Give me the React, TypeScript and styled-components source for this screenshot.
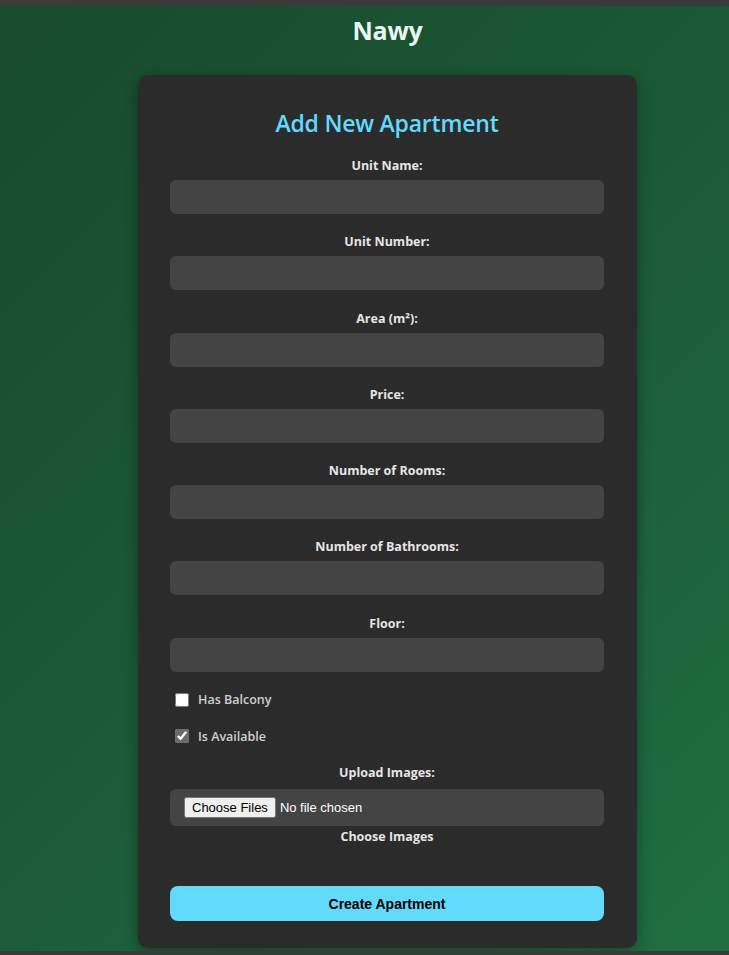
import React from "react";
import styled, { createGlobalStyle } from "styled-components";

const GlobalStyle = createGlobalStyle`
  html, body { margin: 0; padding: 0; background: #3a3a3a; }
  body { font-family: "Open Sans", "Noto Sans", sans-serif; }
  * { box-sizing: border-box; }
`;

const Page = styled.div`
  margin-top: 6px;
  height: 945px;
  padding-left: 46px;
  background: linear-gradient(135deg, #184a2d 0%, #1b5a36 50%, #1f6f42 100%);
  display: flex;
  flex-direction: column;
  align-items: center;
`;

const Brand = styled.h1`
  margin: 8px 0 0;
  font-size: 25px;
  line-height: 32px;
  font-weight: 700;
  color: #eaf6f0;
  letter-spacing: -0.3px;
`;

const Card = styled.form`
  margin-top: 29px;
  width: 499px;
  background: #2b2b2b;
  border-radius: 10px;
  box-shadow: 0 4px 14px rgba(0, 0, 0, 0.35);
  padding: 32px 33px 27px 32px;
  display: flex;
  flex-direction: column;
`;

const Heading = styled.h2`
  margin: 0 0 19px;
  text-align: center;
  font-size: 23px;
  line-height: 32px;
  font-weight: 600;
  color: #61dafb;
  letter-spacing: -0.2px;
`;

const Fields = styled.div`
  display: flex;
  flex-direction: column;
  gap: 20.25px;
`;

const Group = styled.div<{ $gap?: number; $offset?: number }>`
  display: flex;
  flex-direction: column;
  gap: ${(p) => p.$gap ?? 6}px;
  margin-top: ${(p) => p.$offset ?? 0}px;
`;

const Label = styled.label`
  display: block;
  text-align: center;
  font-size: 12.5px;
  line-height: 16px;
  font-weight: 700;
  color: #e6e6e6;
`;

const TextInput = styled.input`
  display: block;
  width: 100%;
  height: 34px;
  border: none;
  border-radius: 6px;
  background: #444444;
  color: #fff;
  padding: 0 10px;
  outline: none;
`;

const CheckRow = styled.label`
  display: flex;
  align-items: center;
  height: 16px;
  font-size: 12.5px;
  font-weight: 600;
  color: #cfcfcf;
  gap: 9px;
  input {
    width: 14px;
    height: 14px;
    margin: 0 0 0 5px;
    accent-color: #6b6b6b;
  }
`;

const FileBox = styled.div`
  height: 37px;
  border-radius: 6px;
  background: #444444;
  display: flex;
  align-items: center;
  padding: 0 14px;
  input {
    font-family: Arial, "Liberation Sans", sans-serif;
    font-size: 13px;
    color: #fff;
  }
`;

const Hint = styled.div`
  margin-top: -5px;
  text-align: center;
  font-size: 12.5px;
  line-height: 16px;
  font-weight: 700;
  color: #e6e6e6;
`;

const Submit = styled.button`
  margin-top: 41px;
  height: 35px;
  width: 100%;
  border: none;
  border-radius: 8px;
  background: #61dafb;
  color: #000;
  font-family: Arial, "Liberation Sans", sans-serif;
  font-size: 14px;
  font-weight: 700;
  cursor: pointer;
`;

const fields = [
  "Unit Name:",
  "Unit Number:",
  "Area (m²):",
  "Price:",
  "Number of Rooms:",
  "Number of Bathrooms:",
  "Floor:",
];

export default function App() {
  return (
    <>
      <GlobalStyle />
      <Page>
        <Brand>Nawy</Brand>
        <Card onSubmit={(e) => e.preventDefault()}>
          <Heading>Add New Apartment</Heading>
          <Fields>
            {fields.map((f) => (
              <Group key={f}>
                <Label>{f}</Label>
                <TextInput type="text" />
              </Group>
            ))}
            <CheckRow>
              <input type="checkbox" />
              Has Balcony
            </CheckRow>
            <CheckRow>
              <input type="checkbox" defaultChecked />
              Is Available
            </CheckRow>
            <Group $gap={8} $offset={1}>
              <Label>Upload Images:</Label>
              <FileBox>
                <input type="file" multiple />
              </FileBox>
              <Hint>Choose Images</Hint>
            </Group>
          </Fields>
          <Submit type="submit">Create Apartment</Submit>
        </Card>
      </Page>
    </>
  );
}
